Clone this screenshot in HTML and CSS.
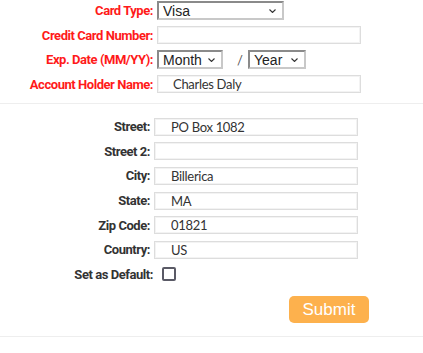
FILE: index.html
```html
<!DOCTYPE html>
<html lang="en">
<head>
    <meta charset="UTF-8">
    <meta name="viewport" content="width=device-width, initial-scale=1.0">
    <title>Payment Details</title>
    <link rel="stylesheet" href="styles.css">
</head>
<body>
    <form class="payment-form">
        <div class="section card-section">
            <label class="field-label" for="cardType">Card Type:</label>
            <div class="field">
                <select id="cardType" class="select-box card-select">
                    <option>Visa</option>
                </select>
            </div>

            <label class="field-label" for="cardNumber">Credit Card Number:</label>
            <div class="field">
                <input type="text" id="cardNumber" class="text-box">
            </div>

            <label class="field-label" for="expMonth">Exp. Date (MM/YY):</label>
            <div class="field exp-field">
                <select id="expMonth" class="select-box month-select">
                    <option>Month</option>
                </select>
                <span class="slash">/</span>
                <select id="expYear" class="select-box year-select">
                    <option>Year</option>
                </select>
            </div>

            <label class="field-label" for="holderName">Account Holder Name:</label>
            <div class="field">
                <input type="text" id="holderName" class="text-box" value="Charles Daly">
            </div>
        </div>

        <hr class="divider">

        <div class="section address-section">
            <label class="field-label" for="street">Street:</label>
            <div class="field">
                <input type="text" id="street" class="text-box" value="PO Box 1082">
            </div>

            <label class="field-label" for="street2">Street 2:</label>
            <div class="field">
                <input type="text" id="street2" class="text-box">
            </div>

            <label class="field-label" for="city">City:</label>
            <div class="field">
                <input type="text" id="city" class="text-box" value="Billerica">
            </div>

            <label class="field-label" for="state">State:</label>
            <div class="field">
                <input type="text" id="state" class="text-box" value="MA">
            </div>

            <label class="field-label" for="zip">Zip Code:</label>
            <div class="field">
                <input type="text" id="zip" class="text-box" value="01821">
            </div>

            <label class="field-label" for="country">Country:</label>
            <div class="field">
                <input type="text" id="country" class="text-box" value="US">
            </div>

            <label class="field-label default-label" for="isDefault">Set as Default:</label>
            <div class="field checkbox-field">
                <span class="checkbox" id="isDefault"></span>
            </div>
        </div>

        <div class="actions">
            <button type="submit" class="submit-btn">Submit</button>
        </div>

        <hr class="divider bottom-divider">
    </form>
</body>
</html>
```

FILE: styles.css
```css
body {
    margin: 0;
    padding: 0;
    background-color: #fff;
    font-family: Roboto, "Liberation Sans", Arial, sans-serif;
}

.payment-form {
    display: flex;
    flex-direction: column;
}

.section {
    display: grid;
    grid-auto-rows: 19px;
    row-gap: 5.6px;
    align-items: center;
}

.card-section {
    grid-template-columns: 153px 1fr;
    column-gap: 4px;
    padding-top: 1px;
}

.address-section {
    grid-template-columns: 150px 1fr;
    column-gap: 4px;
    padding-top: 13.5px;
}

.field-label {
    text-align: right;
    font-size: 13px;
    font-weight: bold;
    line-height: 19px;
    letter-spacing: -0.45px;
    white-space: nowrap;
}

.card-section .field-label {
    color: #ff1a1a;
}

.address-section .field-label {
    color: #333;
}

.address-section .default-label {
    margin-right: -3px;
}

.field {
    display: flex;
    align-items: center;
    height: 19px;
}

.text-box {
    box-sizing: border-box;
    width: 204px;
    height: 18px;
    margin: 0;
    padding: 0 0 0 15px;
    border: 1px solid #ddd;
    box-shadow: inset 0 0 0 1px #f3f3f3;
    font-family: Lato, "Open Sans", sans-serif;
    font-size: 13px;
    letter-spacing: -0.3px;
    color: #333;
    outline: none;
}

.address-section .text-box {
    padding-left: 16px;
}

.select-box {
    box-sizing: border-box;
    height: 19px;
    margin: 0;
    padding: 0 4px;
    border: 2px solid #8a8a8a;
    border-right-color: #c8c8c8;
    border-bottom-color: #c8c8c8;
    background-color: #fff;
    font-family: "Liberation Sans", Arial, sans-serif;
    font-size: 14px;
    color: #222;
    -webkit-appearance: none;
    appearance: none;
    background-image: url("data:image/svg+xml;utf8,<svg xmlns='http://www.w3.org/2000/svg' width='7' height='4'><path d='M0.5 0.5 L3.5 3.5 L6.5 0.5' fill='none' stroke='%23333' stroke-width='1.1'/></svg>");
    background-repeat: no-repeat;
    background-position: right 6px center;
}

.card-select {
    width: 127px;
}

.month-select {
    width: 66px;
}

.year-select {
    width: 58px;
}

.slash {
    box-sizing: border-box;
    width: 25px;
    padding-left: 14px;
    font-family: Lato, sans-serif;
    font-size: 13px;
    color: #555;
}

.checkbox-field {
    padding-left: 8px;
}

.checkbox {
    box-sizing: border-box;
    width: 14px;
    height: 14px;
    border: 2px solid #5a5a66;
    border-radius: 2px;
}

.divider {
    margin: 9px 0 0 0;
    border: none;
    border-top: 1px solid #eee;
}

.actions {
    display: flex;
    padding: 12.5px 0 0 289px;
}

.submit-btn {
    width: 80px;
    height: 27px;
    border: none;
    border-radius: 5px;
    background-color: #fdb14d;
    color: #fff;
    font-family: "Liberation Sans", Arial, sans-serif;
    font-size: 17px;
    cursor: pointer;
}

.bottom-divider {
    margin-top: 13px;
}
```
